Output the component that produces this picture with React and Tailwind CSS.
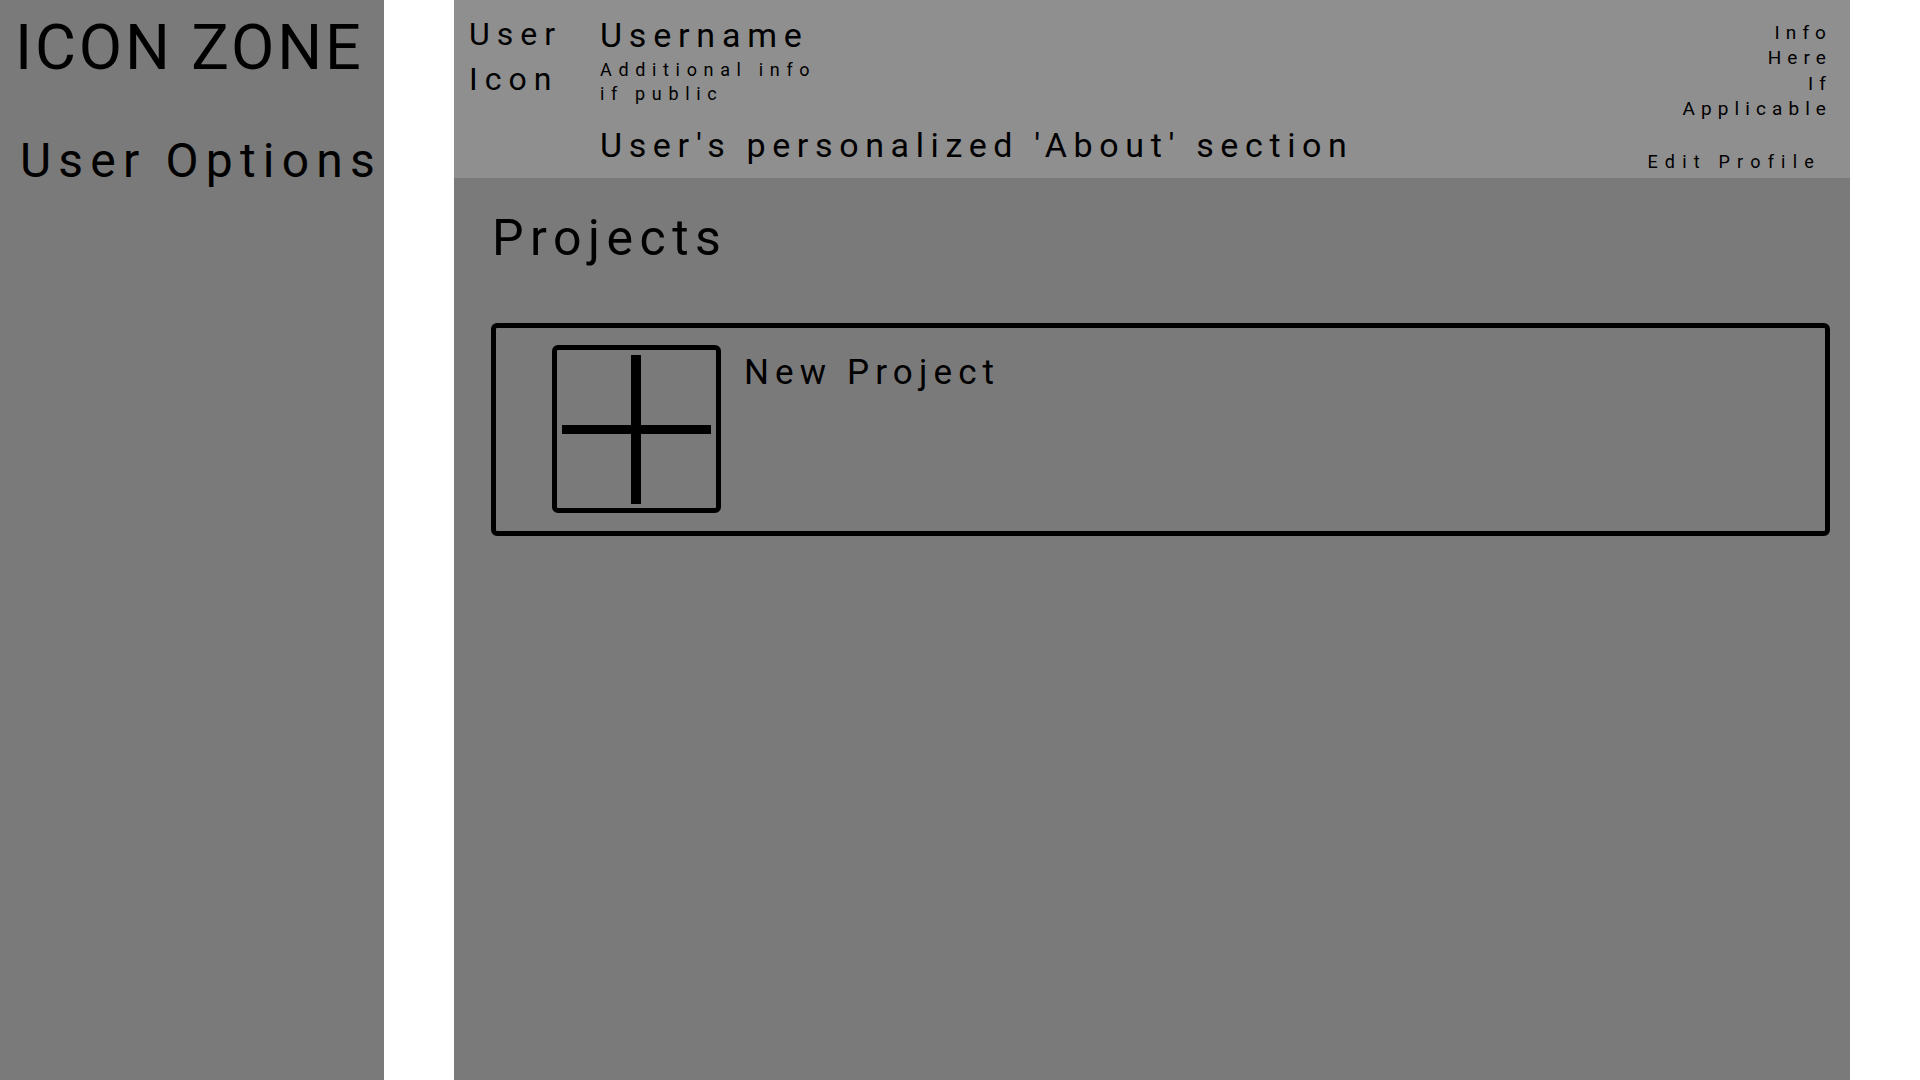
import React from "react";

function PlusBox() {
  return (
    <div className="w-[169px] h-[168px] border-[5px] border-black rounded-[6px] shrink-0">
      <svg width="159" height="158" viewBox="0 0 159 158" className="block">
        <rect x="74" y="5" width="10" height="149" fill="black" />
        <rect x="5" y="75" width="149" height="9" fill="black" />
      </svg>
    </div>
  );
}

export default function App() {
  const font = { fontFamily: "Roboto, 'Liberation Sans', sans-serif" };

  return (
    <div className="flex w-[1920px] h-[1080px] bg-white text-black overflow-hidden" style={font}>
      {/* Sidebar */}
      <aside className="w-[384px] h-full bg-[#7a7a7a] shrink-0 pl-[15px] pt-[12px] whitespace-nowrap">
        <h1 className="text-[63px] leading-[72px] tracking-[0.045em]">ICON ZONE</h1>
        <div className="mt-[49px] pl-[5px] text-[48px] leading-[56px] tracking-[0.15em]">
          User Options
        </div>
      </aside>

      <div className="w-[70px] shrink-0" />

      {/* Main */}
      <main className="w-[1396px] h-full flex flex-col shrink-0">
        {/* Profile header */}
        <header className="h-[178px] bg-[#8f8f8f] flex pl-[15px] pr-[18px] pt-[12px] whitespace-nowrap">
          <div className="w-[131px] text-[32px] leading-[45px] tracking-[0.22em]">
            <div>User</div>
            <div>Icon</div>
          </div>

          <div className="flex-1 flex flex-col">
            <div className="mt-[3px] text-[34px] leading-[40px] tracking-[0.2em]">Username</div>
            <div className="mt-[3px] text-[18px] leading-[24px] tracking-[0.37em]">
              <div>Additional info</div>
              <div>if public</div>
            </div>
            <div className="mt-[19px] text-[34px] leading-[40px] tracking-[0.195em]">
              User's personalized 'About' section
            </div>
          </div>

          <div className="flex flex-col items-end pt-[8px]">
            <div className="text-[19px] leading-[25.3px] tracking-[0.32em] text-right">
              <div>Info</div>
              <div>Here</div>
              <div>If</div>
              <div>Applicable</div>
            </div>
            <button className="mt-[29px] mr-[11px] text-[18px] leading-[24px] tracking-[0.4em]">
              Edit Profile
            </button>
          </div>
        </header>

        {/* Projects */}
        <section className="flex-1 bg-[#7a7a7a] pl-[37px] pr-[20px] pt-[30px]">
          <h2 className="pl-[1px] text-[50px] leading-[60px] tracking-[0.13em]">Projects</h2>

          <div className="mt-[55px] h-[213px] border-[5px] border-black rounded-[6px] flex items-start pl-[56px] pt-[17px]">
            <PlusBox />
            <div className="ml-[23px] mt-[8px] text-[35px] leading-[40px] tracking-[0.175em]">
              New Project
            </div>
          </div>
        </section>
      </main>
    </div>
  );
}
